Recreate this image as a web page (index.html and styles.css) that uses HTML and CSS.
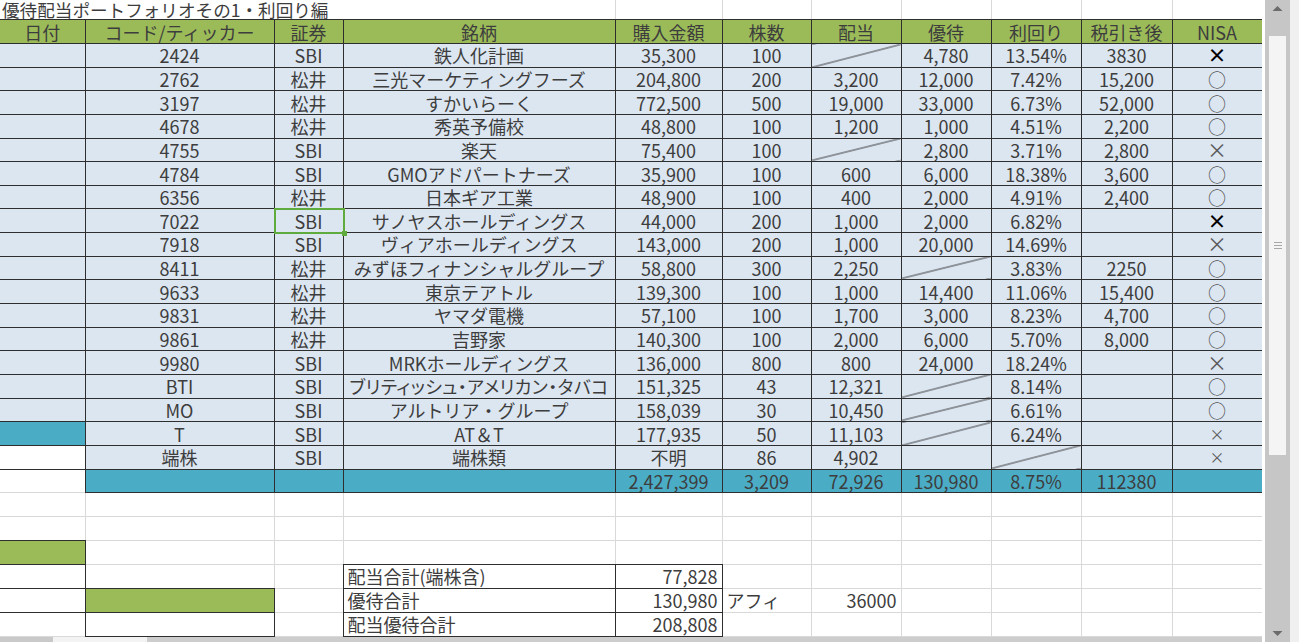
FILE: index.html
```html
<!DOCTYPE html>
<html lang="ja">
<head>
<meta charset="utf-8">
<title>優待配当ポートフォリオ</title>
<link rel="stylesheet" href="styles.css">
</head>
<body>
<div class="screen">
  <div class="sheet">
    <table class="grid">
      <colgroup>
        <col class="c-a"><col class="c-b"><col class="c-c"><col class="c-d"><col class="c-e"><col class="c-f"><col class="c-g"><col class="c-h"><col class="c-i"><col class="c-j"><col class="c-k">
      </colgroup>
      <tr class="r-title">
        <td class="title" colspan="4">優待配当ポートフォリオその1・利回り編</td>
        <td></td><td></td><td></td><td></td><td></td><td></td><td></td>
      </tr>
      <tr class="r-head">
        <td>日付</td><td>コード/ティッカー</td><td>証券</td><td>銘柄</td><td>購入金額</td><td>株数</td><td>配当</td><td>優待</td><td>利回り</td><td>税引き後</td><td>NISA</td>
      </tr>
      <tr class="r-data"><td></td><td>2424</td><td>SBI</td><td>鉄人化計画</td><td>35,300</td><td>100</td><td class="dg"></td><td>4,780</td><td>13.54%</td><td>3830</td><td class="mk mk-xb">×</td></tr>
      <tr class="r-data"><td></td><td>2762</td><td>松井</td><td>三光マーケティングフーズ</td><td>204,800</td><td>200</td><td>3,200</td><td>12,000</td><td>7.42%</td><td>15,200</td><td class="mk mk-o">○</td></tr>
      <tr class="r-data"><td></td><td>3197</td><td>松井</td><td>すかいらーく</td><td>772,500</td><td>500</td><td>19,000</td><td>33,000</td><td>6.73%</td><td>52,000</td><td class="mk mk-o">○</td></tr>
      <tr class="r-data"><td></td><td>4678</td><td>松井</td><td>秀英予備校</td><td>48,800</td><td>100</td><td>1,200</td><td>1,000</td><td>4.51%</td><td>2,200</td><td class="mk mk-o">○</td></tr>
      <tr class="r-data"><td></td><td>4755</td><td>SBI</td><td>楽天</td><td>75,400</td><td>100</td><td class="dg"></td><td>2,800</td><td>3.71%</td><td>2,800</td><td class="mk mk-xt">×</td></tr>
      <tr class="r-data"><td></td><td>4784</td><td>SBI</td><td>GMOアドパートナーズ</td><td>35,900</td><td>100</td><td>600</td><td>6,000</td><td>18.38%</td><td>3,600</td><td class="mk mk-o">○</td></tr>
      <tr class="r-data"><td></td><td>6356</td><td>松井</td><td>日本ギア工業</td><td>48,900</td><td>100</td><td>400</td><td>2,000</td><td>4.91%</td><td>2,400</td><td class="mk mk-o">○</td></tr>
      <tr class="r-data"><td></td><td>7022</td><td class="sel">SBI</td><td>サノヤスホールディングス</td><td>44,000</td><td>200</td><td>1,000</td><td>2,000</td><td>6.82%</td><td></td><td class="mk mk-xb">×</td></tr>
      <tr class="r-data"><td></td><td>7918</td><td>SBI</td><td>ヴィアホールディングス</td><td>143,000</td><td>200</td><td>1,000</td><td>20,000</td><td>14.69%</td><td></td><td class="mk mk-xt">×</td></tr>
      <tr class="r-data"><td></td><td>8411</td><td>松井</td><td>みずほフィナンシャルグループ</td><td>58,800</td><td>300</td><td>2,250</td><td class="dg"></td><td>3.83%</td><td>2250</td><td class="mk mk-o">○</td></tr>
      <tr class="r-data"><td></td><td>9633</td><td>松井</td><td>東京テアトル</td><td>139,300</td><td>100</td><td>1,000</td><td>14,400</td><td>11.06%</td><td>15,400</td><td class="mk mk-o">○</td></tr>
      <tr class="r-data"><td></td><td>9831</td><td>松井</td><td>ヤマダ電機</td><td>57,100</td><td>100</td><td>1,700</td><td>3,000</td><td>8.23%</td><td>4,700</td><td class="mk mk-o">○</td></tr>
      <tr class="r-data"><td></td><td>9861</td><td>松井</td><td>吉野家</td><td>140,300</td><td>100</td><td>2,000</td><td>6,000</td><td>5.70%</td><td>8,000</td><td class="mk mk-o">○</td></tr>
      <tr class="r-data"><td></td><td>9980</td><td>SBI</td><td>MRKホールディングス</td><td>136,000</td><td>800</td><td>800</td><td>24,000</td><td>18.24%</td><td></td><td class="mk mk-xt">×</td></tr>
      <tr class="r-data"><td></td><td>BTI</td><td>SBI</td><td class="tight">ブリティッシュ・アメリカン・タバコ</td><td>151,325</td><td>43</td><td>12,321</td><td class="dg"></td><td>8.14%</td><td></td><td class="mk mk-o">○</td></tr>
      <tr class="r-data"><td></td><td>MO</td><td>SBI</td><td>アルトリア・グループ</td><td>158,039</td><td>30</td><td>10,450</td><td class="dg"></td><td>6.61%</td><td></td><td class="mk mk-o">○</td></tr>
      <tr class="r-data"><td class="teal"></td><td>T</td><td>SBI</td><td>AT＆T</td><td>177,935</td><td>50</td><td>11,103</td><td class="dg"></td><td>6.24%</td><td></td><td class="mk mk-xs">×</td></tr>
      <tr class="r-data"><td class="plain"></td><td>端株</td><td>SBI</td><td>端株類</td><td>不明</td><td>86</td><td>4,902</td><td></td><td class="dg"></td><td></td><td class="mk mk-xs">×</td></tr>
      <tr class="r-tot"><td class="plain"></td><td></td><td></td><td></td><td>2,427,399</td><td>3,209</td><td>72,926</td><td>130,980</td><td>8.75%</td><td>112380</td><td></td></tr>
      <tr class="r-blank"><td></td><td></td><td></td><td></td><td></td><td></td><td></td><td></td><td></td><td></td><td></td></tr>
      <tr class="r-blank"><td></td><td></td><td></td><td></td><td></td><td></td><td></td><td></td><td></td><td></td><td></td></tr>
      <tr class="r-blank"><td class="box green"></td><td></td><td></td><td></td><td></td><td></td><td></td><td></td><td></td><td></td><td></td></tr>
      <tr class="r-blank"><td class="box"></td><td></td><td></td><td class="box lbl">配当合計(端株含)</td><td class="box num">77,828</td><td></td><td></td><td></td><td></td><td></td><td></td></tr>
      <tr class="r-blank"><td class="box"></td><td class="box green"></td><td></td><td class="box lbl">優待合計</td><td class="box num">130,980</td><td class="lbl">アフィ</td><td class="num">36000</td><td></td><td></td><td></td><td></td></tr>
      <tr class="r-blank"><td></td><td class="box"></td><td></td><td class="box lbl">配当優待合計</td><td class="box num">208,808</td><td></td><td></td><td></td><td></td><td></td><td></td></tr>
    </table>
    <div class="hscroll">
      <div class="hs-btn"></div>
      <div class="hs-gap"></div>
      <div class="hs-thumb"></div>
    </div>
  </div>
  <div class="vscroll">
    <div class="vs-edge"></div>
    <div class="vs-track">
      <div class="vs-arrow">
        <svg width="11" height="7" viewBox="0 0 11 7"><polygon points="0.5,6 5.5,1 10.5,6" fill="#6b6b6b"/></svg>
      </div>
      <div class="vs-thumb">
        <svg width="8" height="7" viewBox="0 0 8 7"><path d="M0 0.5H8M0 3.5H8M0 6.5H8" stroke="#a8a8a8" stroke-width="1"/></svg>
      </div>
      <div class="vs-fill"></div>
      <div class="vs-arrow">
        <svg width="11" height="7" viewBox="0 0 11 7"><polygon points="0.5,1 5.5,6 10.5,1" fill="#6b6b6b"/></svg>
      </div>
    </div>
    <div class="vs-side"></div>
  </div>
</div>
</body>
</html>
```
FILE: styles.css
```css
html, body {
  margin: 0;
  padding: 0;
  background: #ffffff;
}

body {
  font-family: "Noto Sans CJK JP", "Noto Sans", sans-serif;
  color: #3d3d3d;
}

.screen {
  display: flex;
  width: 1299px;
  height: 642px;
  overflow: hidden;
}

.sheet {
  width: 1262px;
  height: 642px;
  display: flex;
  flex-direction: column;
  overflow: hidden;
  flex: none;
}

.grid {
  border-collapse: collapse;
  table-layout: fixed;
  width: 1262px;
  font-size: 18px;
  flex: none;
}

.c-a { width: 85px; }
.c-b { width: 189px; }
.c-c { width: 69px; }
.c-d { width: 272px; }
.c-e { width: 107px; }
.c-f { width: 89px; }
.c-g { width: 90px; }
.c-h { width: 90px; }
.c-i { width: 90px; }
.c-j { width: 91px; }
.c-k { width: 90px; }

.grid td {
  border: 1px solid #d9d9d9;
  padding: 0;
  text-align: center;
  vertical-align: middle;
  line-height: 20px;
  white-space: nowrap;
  overflow: hidden;
}

.r-title { height: 19px; }
.r-head { height: 24px; }
.r-data { height: 23.65px; }
.r-tot { height: 23.65px; }
.r-blank { height: 23.9px; }

.r-title td {
  border-top: none;
}

.grid td.title {
  text-align: left;
  padding-left: 2px;
  font-size: 17.6px;
  line-height: 19px;
  overflow: visible;
}

/* dark borders ("double" at 1px paints solid and wins collapse conflicts) */
.r-head td,
.r-data td,
.r-tot td,
.grid td.box {
  border: 1px double #2e2e2e;
}

.grid tr td:first-child {
  border-left: none;
}

.r-head td {
  background: #9bbb59;
}

.r-data td {
  background: #dce6f1;
}

.r-tot td {
  background: #4bacc6;
}

.grid td.teal {
  background: #4bacc6;
}

.grid td.plain {
  background: #ffffff;
  border-left: none;
  border-bottom-color: #d9d9d9;
  border-bottom-style: solid;
}

.grid td.green {
  background: #9bbb59;
}

.grid td.lbl {
  text-align: left;
  padding-left: 4px;
}

.grid td.num {
  text-align: right;
  padding-right: 4px;
}

.tight {
  font-feature-settings: "palt";
  letter-spacing: 0.4px;
}

.grid td.dg {
  background: linear-gradient(to bottom right,
    #dce6f1 calc(50% - 0.9px),
    #333333 50%,
    #dce6f1 calc(50% + 0.9px));
}

.grid td.sel {
  position: relative;
  overflow: visible;
}

.grid td.sel::after {
  content: "";
  position: absolute;
  left: -1px;
  top: -1px;
  right: -2px;
  bottom: -2px;
  border: 2px solid #5fab3e;
}

.grid td.sel::before {
  content: "";
  position: absolute;
  right: -4px;
  bottom: -4px;
  width: 5px;
  height: 5px;
  background: #5fab3e;
  z-index: 2;
}

.grid td.mk {
  line-height: 20px;
}

.grid td.mk-o {
  color: #555555;
  font-size: 18px;
}

.grid td.mk-xb {
  color: #000000;
  font-weight: 700;
  font-size: 19px;
}

.grid td.mk-xt {
  color: #5a5a5a;
  font-size: 20px;
}

.grid td.mk-xs {
  color: #5a5a5a;
  font-size: 15px;
}

/* horizontal scrollbar strip */
.hscroll {
  flex: 1;
  display: flex;
  background: #ffffff;
  min-height: 5px;
}

.hs-btn {
  width: 53px;
  background: #c9c9c9;
}

.hs-gap {
  width: 94px;
  background: #f3f3f3;
}

.hs-thumb {
  flex: 1;
  background: #cdcdcd;
}

/* vertical scrollbar */
.vscroll {
  width: 37px;
  height: 642px;
  display: flex;
  flex: none;
}

.vs-edge {
  width: 3px;
  background: #ffffff;
}

.vs-track {
  width: 25px;
  display: flex;
  flex-direction: column;
  align-items: center;
  background: #c6c6c6;
}

.vs-arrow {
  height: 17px;
  display: flex;
  align-items: center;
  justify-content: center;
  flex: none;
}

.vs-thumb {
  width: 17px;
  height: 419px;
  margin-top: 19px;
  background: #f4f4f4;
  display: flex;
  align-items: center;
  justify-content: center;
  flex: none;
}

.vs-fill {
  flex: 1;
}

.vs-side {
  width: 9px;
  background: #f0f0f0;
}
```
